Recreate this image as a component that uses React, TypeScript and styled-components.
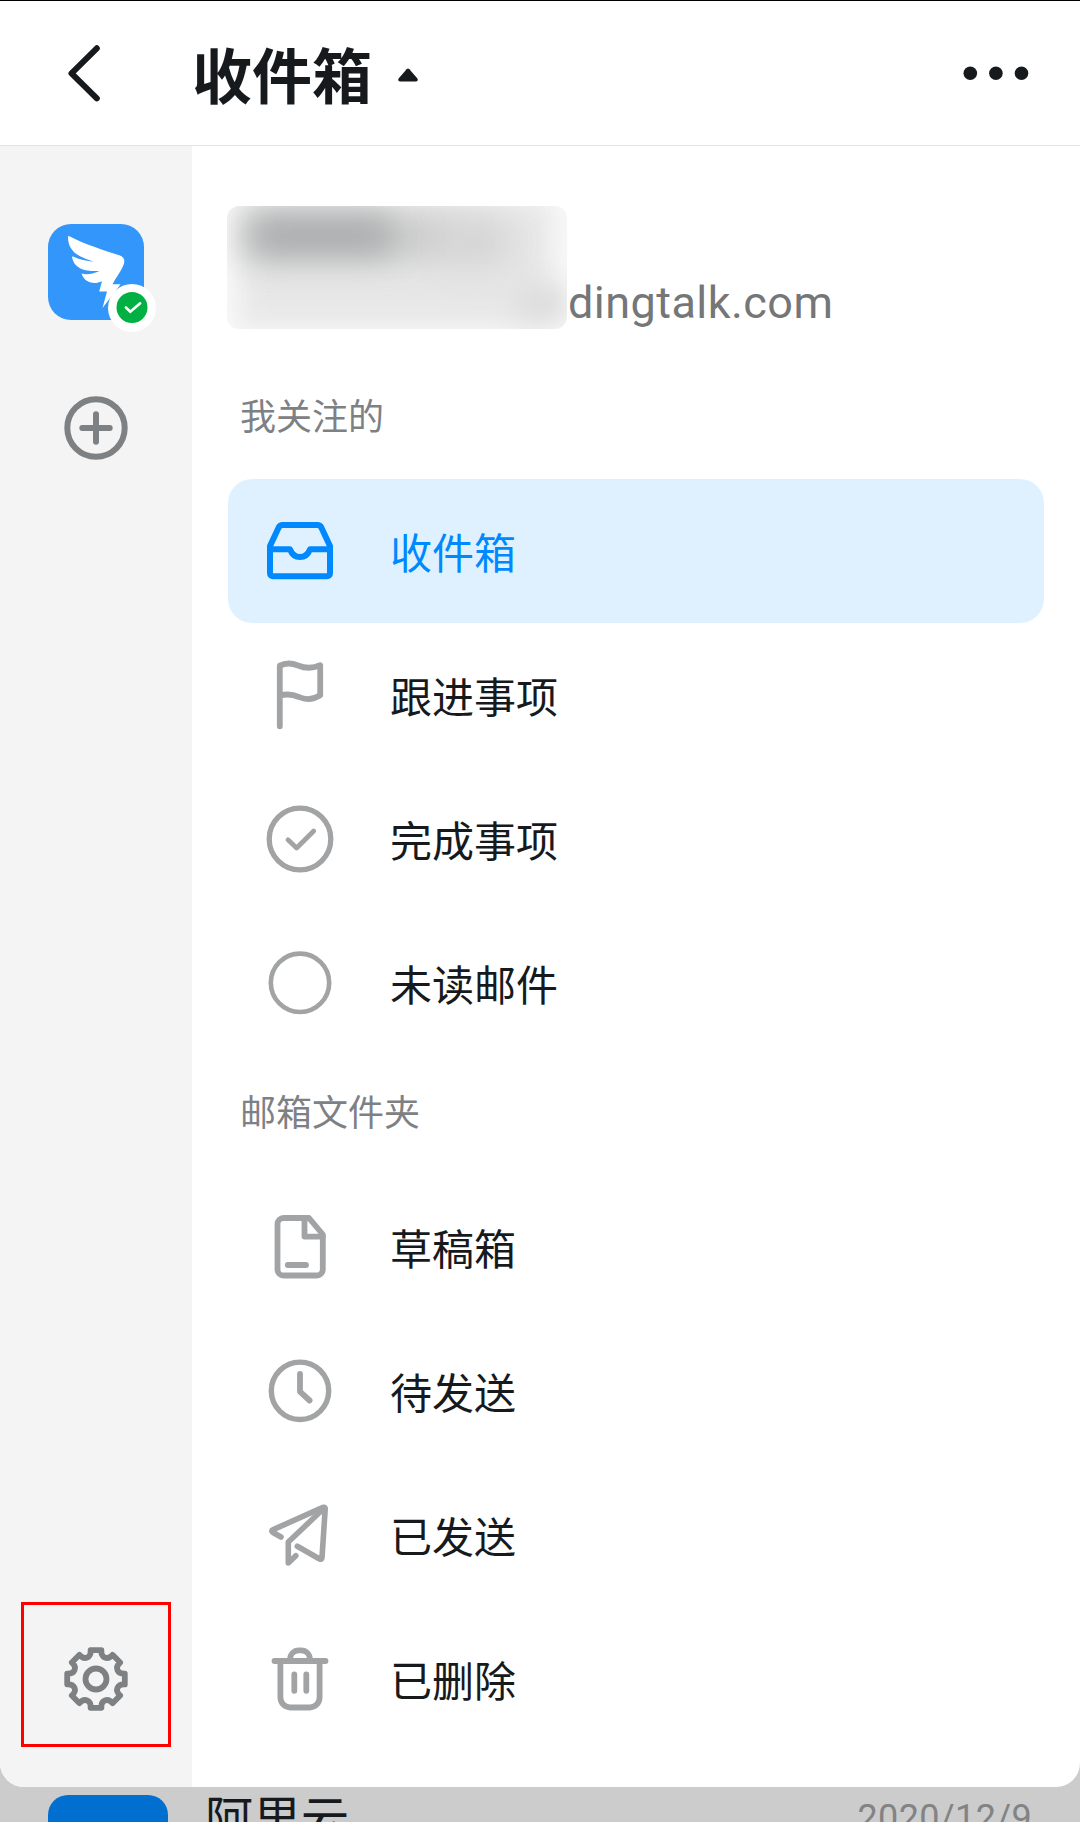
import React from "react";
import styled, { createGlobalStyle } from "styled-components";

const GlobalStyle = createGlobalStyle`
  *, *::before, *::after { box-sizing: border-box; }
  body {
    margin: 0;
    background: #cccccc;
    font-family: "Noto Sans CJK SC", "Noto Sans", sans-serif;
    color: #171a1d;
  }
  svg { display: block; flex: none; }
`;

const Page = styled.div`
  width: 1080px;
  height: 1822px;
  overflow: hidden;
  background: #cccccc;
`;

const Sheet = styled.div`
  display: flex;
  flex-direction: column;
  height: 1787px;
  background: #ffffff;
  border-top: 1px solid #000000;
  border-radius: 0 0 24px 24px;
  overflow: hidden;
`;

const Header = styled.header`
  display: flex;
  align-items: center;
  height: 145px;
  padding: 0 48px 0 60px;
  border-bottom: 1px solid #e2e3e4;
`;

const BackButton = styled.span`
  width: 132px;
`;

const Title = styled.h1`
  margin: 0 26px 0 0;
  padding-bottom: 1px;
  font-size: 60px;
  line-height: 80px;
  font-weight: 700;
`;

const Caret = styled.svg`
  margin-top: 3px;
`;

const MoreButton = styled.span`
  margin-left: auto;
`;

const Body = styled.div`
  display: flex;
  flex: 1;
`;

const Sidebar = styled.aside`
  display: flex;
  flex-direction: column;
  align-items: center;
  width: 192px;
  padding: 78px 0 40px;
  background: #f4f4f4;
`;

const Account = styled.div`
  position: relative;
  width: 96px;
  height: 96px;
  margin-bottom: 76px;
`;

const AccountTile = styled.div`
  width: 96px;
  height: 96px;
  border-radius: 23px;
  background: #3296fa;
`;

const Badge = styled.span`
  position: absolute;
  left: 60px;
  top: 60px;
`;

const SettingsFrame = styled.div`
  display: flex;
  align-items: center;
  justify-content: center;
  width: 150px;
  height: 145px;
  margin-top: auto;
  padding-top: 9px;
  border: 3px solid #fe0000;
`;

const Main = styled.main`
  flex: 1;
  padding: 60px 36px 0;
`;

const Profile = styled.div`
  display: flex;
  align-items: flex-end;
  height: 123px;
  margin-left: -1px;
`;

const Redacted = styled.div`
  position: relative;
  width: 340px;
  height: 123px;
  border-radius: 12px;
  overflow: hidden;
  background: #f8f8f8;
`;

const Smudge = styled.span<{ $x: number; $y: number; $w: number; $h: number; $c: string; $b: number }>`
  position: absolute;
  left: ${(p) => p.$x}px;
  top: ${(p) => p.$y}px;
  width: ${(p) => p.$w}px;
  height: ${(p) => p.$h}px;
  background: ${(p) => p.$c};
  filter: blur(${(p) => p.$b}px);
`;

const Domain = styled.span`
  margin: 0 0 -1px 1px;
  font-family: Roboto, "Noto Sans", sans-serif;
  font-size: 45px;
  line-height: 54px;
  letter-spacing: 0.45px;
  color: #747677;
`;

const SectionLabel = styled.h2<{ $top: number; $bottom: number }>`
  margin: ${(p) => p.$top}px 0 ${(p) => p.$bottom}px 12px;
  font-size: 36px;
  line-height: 48px;
  font-weight: 400;
  color: #7e8184;
`;

const List = styled.ul`
  margin: 0;
  padding: 0;
  list-style: none;
`;

const Item = styled.li<{ $active?: boolean }>`
  display: flex;
  align-items: center;
  gap: 54px;
  height: 144px;
  padding-left: 36px;
  border-radius: 24px;
  background: ${(p) => (p.$active ? "#dff1ff" : "transparent")};
  color: ${(p) => (p.$active ? "#0089ff" : "#171a1d")};

  svg {
    stroke: ${(p) => (p.$active ? "#0089ff" : "#a2a3a5")};
  }
`;

const ItemLabel = styled.span`
  font-size: 42px;
  line-height: 60px;
`;

const MailRow = styled.div`
  display: flex;
  height: 35px;
  padding: 0 48px;
  overflow: hidden;
`;

const MailAvatar = styled.div`
  flex: none;
  width: 120px;
  height: 120px;
  margin: 8px 37px 0 0;
  border-radius: 20px;
  background: #006fcf;
`;

const Sender = styled.span`
  font-size: 48px;
  line-height: 57px;
`;

const MailDate = styled.span`
  margin-left: auto;
  padding: 9px 0 0;
  font-family: Roboto, sans-serif;
  font-size: 36px;
  line-height: 44px;
  letter-spacing: 0.35px;
  color: #828384;
`;

const Glyph = ({ children, width = 5.8 }: { children: React.ReactNode; width?: number }) => (
  <svg width="72" height="72" viewBox="0 0 72 72" fill="none" strokeWidth={width} strokeLinecap="round" strokeLinejoin="round">
    {children}
  </svg>
);

const icons = {
  inbox: (
    <Glyph width={6}>
      <path d="M6 31V58.3a3 3 0 0 0 3 3H63a3 3 0 0 0 3-3V31L57.2 12.2Q56 10 53.5 10H18.5Q16 10 14.8 12.2Z" />
      <path d="M6 34.3H26Q29 42 36 42Q43 42 46 34.3H66" />
    </Glyph>
  ),
  flag: (
    <Glyph>
      <path d="M15.8 67.3V6.7C22 3.5 28 4 34 6.5C42 9.8 49 9.5 56.2 6.2V36.3C49 40.8 42 41.3 35 38C28 35 22 34.8 15.8 36.6" />
    </Glyph>
  ),
  done: (
    <Glyph width={5.3}>
      <circle cx="36" cy="36" r="30.8" />
      <path d="M24 36.8L32.6 45L49.7 28" strokeWidth="4.8" />
    </Glyph>
  ),
  unread: (
    <Glyph width={4.6}>
      <circle cx="36" cy="35.8" r="29.2" />
    </Glyph>
  ),
  draft: (
    <Glyph>
      <path d="M19.5 7H45L58.8 23.5V58.5a6 6 0 0 1-6 6H19.5a6 6 0 0 1-6-6V13a6 6 0 0 1 6-6Z" />
      <path d="M40.5 7V25.6H58.8M23.8 54H42" />
    </Glyph>
  ),
  clock: (
    <Glyph width={5.4}>
      <circle cx="36" cy="35.8" r="28.7" />
      <path d="M36 19V36.7L45.6 45.5" strokeWidth="5.8" />
    </Glyph>
  ),
  sent: (
    <Glyph width={5.6}>
      <path d="M17 38L9 33.5Q6.5 31.8 9.2 30.6L59 8.4Q61.3 7.8 61.2 10L58 58.5Q57.8 61 55.6 60L33.3 47.3" />
      <path d="M60.5 8.8L24.3 43V64L31.8 56.8" />
    </Glyph>
  ),
  trash: (
    <Glyph>
      <path d="M10.5 18H61.5M16.4 18V54.5a10 10 0 0 0 10 10H45.6a10 10 0 0 0 10-10V18" />
      <path d="M26 17C26 11 30 7.4 35 7.4H37C42 7.4 46 11 46 17M30.3 31.3V47.8M42.3 31.3V47.8" />
    </Glyph>
  ),
};

type IconName = keyof typeof icons;

const followed: { icon: IconName; label: string; active?: boolean }[] = [
  { icon: "inbox", label: "收件箱", active: true },
  { icon: "flag", label: "跟进事项" },
  { icon: "done", label: "完成事项" },
  { icon: "unread", label: "未读邮件" },
];

const folders: { icon: IconName; label: string }[] = [
  { icon: "draft", label: "草稿箱" },
  { icon: "clock", label: "待发送" },
  { icon: "sent", label: "已发送" },
  { icon: "trash", label: "已删除" },
];

/* Eight identical teeth, each followed by a concave valley. */
const gearPath = () => {
  const at = (x: number, y: number, deg: number) => {
    const a = (deg * Math.PI) / 180;
    return `${(x * Math.cos(a) - y * Math.sin(a)).toFixed(2)} ${(x * Math.sin(a) + y * Math.cos(a)).toFixed(2)}`;
  };
  let d = `M${at(-5.4, -28.8, 0)}`;
  for (let i = 0; i < 8; i++) {
    const t = i * 45;
    d += `L${at(5.4, -28.8, t)}C${at(-3.6, -21.4, t + 22.5)} ${at(3.6, -21.4, t + 22.5)} ${at(-5.4, -28.8, t + 45)}`;
  }
  return d + "Z";
};

const Wing = () => (
  <svg width="96" height="96" viewBox="0 0 96 96" fill="#fff">
    <path d="M20 13Q20 11.3 22 12.4C36 20 56 26 72 31.6Q77.5 33.8 76 39.5C74 46 68 53.5 64.5 60.3H72.6L54.5 84L59 67.5H51.2L54 57.3C45 61.5 36 58 33.6 49.6C40 51 46 49.5 51.5 47C39 47.5 26.5 46 24 33Q24 32.2 25 32.6C31 35.8 39 37 46 37.8C35 34 20 30 20 13Z" />
  </svg>
);

export default function App() {
  return (
    <>
      <GlobalStyle />
      <Page>
        <Sheet>
          <Header>
            <BackButton>
              <svg width="48" height="72" viewBox="0 0 48 72" fill="none" stroke="#171a1d" strokeWidth="6" strokeLinecap="round" strokeLinejoin="round">
                <path d="M36.8 11.3L11.5 36.3L36.8 61.3" />
              </svg>
            </BackButton>
            <Title>收件箱</Title>
            <Caret width="20" height="14" viewBox="0 0 20 14" fill="#171a1d">
              <path d="M8.6 1.2Q10 -0.2 11.4 1.2L19.4 10.5Q20.6 13.5 18 13.5H2Q-0.6 13.5 0.6 10.5Z" />
            </Caret>
            <MoreButton>
              <svg width="72" height="24" viewBox="0 0 72 24" fill="#171a1d">
                <circle cx="10.3" cy="12.2" r="6.8" />
                <circle cx="35.9" cy="12.2" r="6.8" />
                <circle cx="61.5" cy="12.2" r="6.8" />
              </svg>
            </MoreButton>
          </Header>
          <Body>
            <Sidebar>
              <Account>
                <AccountTile>
                  <Wing />
                </AccountTile>
                <Badge>
                  <svg width="48" height="48" viewBox="0 0 48 48" fill="none">
                    <circle cx="24" cy="24" r="24" fill="#fff" />
                    <circle cx="24" cy="23.5" r="15.5" fill="#00b042" />
                    <path d="M17.9 23.5L22.3 27.8L32.2 19.3" stroke="#fff" strokeWidth="2.6" strokeLinecap="round" />
                  </svg>
                </Badge>
              </Account>
              <svg width="64" height="64" viewBox="0 0 64 64" fill="none" stroke="#7e8183" strokeWidth="6" strokeLinecap="round">
                <circle cx="32" cy="32" r="28.7" />
                <path d="M18.3 32H45.7M32 18.3V45.7" />
              </svg>
              <SettingsFrame>
                <svg width="72" height="72" viewBox="-36 -36 72 72" fill="none" stroke="#7e8183" strokeWidth="5.8" strokeLinejoin="round">
                  <path d={gearPath()} />
                  <circle r="10.5" />
                </svg>
              </SettingsFrame>
            </Sidebar>
            <Main>
              <Profile>
                <Redacted>
                  <Smudge $x={14} $y={-4} $w={310} $h={124} $c="#e6e7e6" $b={12} />
                  <Smudge $x={18} $y={10} $w={210} $h={42} $c="#cbcccb" $b={17} />
                  <Smudge $x={24} $y={12} $w={142} $h={34} $c="#a4a5a8" $b={17} />
                  <Smudge $x={224} $y={14} $w={56} $h={42} $c="#cfd0cf" $b={19} />
                  <Smudge $x={292} $y={80} $w={48} $h={34} $c="#dcdcdc" $b={13} />
                </Redacted>
                <Domain>dingtalk.com</Domain>
              </Profile>
              <SectionLabel $top={61} $bottom={41}>我关注的</SectionLabel>
              <List>
                {followed.map(({ icon, label, active }) => (
                  <Item key={label} $active={active}>
                    {icons[icon]}
                    <ItemLabel>{label}</ItemLabel>
                  </Item>
                ))}
              </List>
              <SectionLabel $top={31} $bottom={41}>邮箱文件夹</SectionLabel>
              <List>
                {folders.map(({ icon, label }) => (
                  <Item key={label}>
                    {icons[icon]}
                    <ItemLabel>{label}</ItemLabel>
                  </Item>
                ))}
              </List>
            </Main>
          </Body>
        </Sheet>
        <MailRow>
          <MailAvatar />
          <Sender>阿里云</Sender>
          <MailDate>2020/12/9</MailDate>
        </MailRow>
      </Page>
    </>
  );
}
